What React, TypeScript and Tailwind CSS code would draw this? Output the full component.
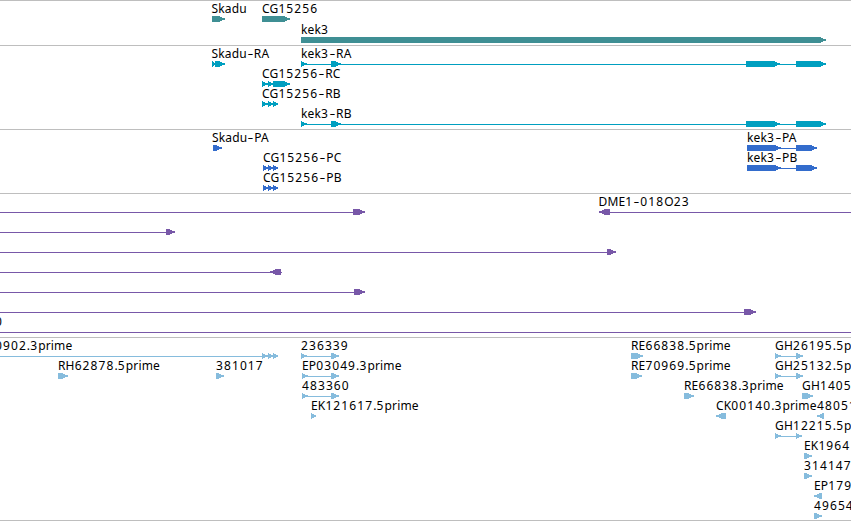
type Feature = {
  label?: string;
  x: number;
  // [start, end] pairs, one arrow head is drawn per exon
  exons?: [number, number][];
  line?: [number, number];
  reverse?: boolean;
};

type Track = {
  name: string;
  className: string;
  rowClass: string;
  rows: Feature[][];
};

const tracks: Track[] = [
  {
    name: 'gene',
    className: 'text-[#3f8f94] pb-0.5',
    rowClass: 'h-[21px]',
    rows: [
      [
        { label: 'Skadu', x: 211.5, exons: [[212, 225]] },
        { label: 'CG15256', x: 262, exons: [[262, 290]] },
      ],
      [{ label: 'kek3', x: 301, exons: [[301, 826]] }],
    ],
  },
  {
    name: 'transcript',
    className: 'text-[#009fc0] pb-[3px]',
    rowClass: 'h-5',
    rows: [
      [
        { label: 'Skadu-RA', x: 211.5, exons: [[212, 216], [215, 225]] },
        { label: 'kek3-RA', x: 301, line: [301, 826], exons: [[301, 307], [331, 341], [746, 780], [796, 826]] },
      ],
      [{ label: 'CG15256-RC', x: 262, exons: [[262, 268], [268, 274], [273, 290]] }],
      [{ label: 'CG15256-RB', x: 262, exons: [[262, 268], [268, 274], [273, 278]] }],
      [{ label: 'kek3-RB', x: 301, line: [301, 826], exons: [[301, 307], [331, 341], [746, 780], [796, 826]] }],
    ],
  },
  {
    name: 'protein',
    className: 'text-[#336ccc] pb-[3px]',
    rowClass: 'h-5',
    rows: [
      [
        { label: 'Skadu-PA', x: 212, exons: [[213, 222]] },
        { label: 'kek3-PA', x: 747, line: [747, 817], exons: [[747, 781], [796, 817]] },
      ],
      [
        { label: 'CG15256-PC', x: 263, exons: [[263, 268], [268, 274], [273, 278]] },
        { label: 'kek3-PB', x: 747, line: [747, 817], exons: [[747, 781], [796, 817]] },
      ],
      [{ label: 'CG15256-PB', x: 263, exons: [[263, 268], [268, 274], [273, 278]] }],
    ],
  },
  {
    name: 'bac',
    className: 'text-[#7858a8] pb-[3px]',
    rowClass: 'h-5',
    rows: [
      [
        { x: 0, line: [0, 360], exons: [[353, 365]] },
        { label: 'DME1-018O23', x: 598.5, line: [600, 851], exons: [[599, 610]], reverse: true },
      ],
      [{ x: 0, line: [0, 170], exons: [[166, 175]] }],
      [{ x: 0, line: [0, 612], exons: [[607, 616]] }],
      [{ x: 0, line: [0, 282], exons: [[270, 281]], reverse: true }],
      [{ x: 0, line: [0, 360], exons: [[354, 365]] }],
      [{ x: 0, line: [0, 750], exons: [[744, 756]] }],
      [{ label: '0', x: -5, line: [0, 851] }],
    ],
  },
  {
    name: 'est',
    className: 'text-[#86bcdd] pb-0.5',
    rowClass: 'h-5',
    rows: [
      [
        { label: '0902.3prime', x: -5, line: [0, 278], exons: [[262, 268], [268, 274], [273, 278]] },
        { label: '236339', x: 301, line: [301, 335], exons: [[301, 307], [331, 339]] },
        { label: 'RE66838.5prime', x: 631, exons: [[631, 643]] },
        { label: 'GH26195.5p', x: 775, line: [775, 800], exons: [[775, 781], [796, 803]] },
      ],
      [
        { label: 'RH62878.5prime', x: 58, exons: [[58, 68]] },
        { label: '381017', x: 216, exons: [[216, 224]] },
        { label: 'EP03049.3prime', x: 302, line: [302, 335], exons: [[302, 308], [331, 339]] },
        { label: 'RE70969.5prime', x: 631, exons: [[631, 642]] },
        { label: 'GH25132.5p', x: 775, line: [775, 800], exons: [[775, 781], [796, 803]] },
      ],
      [
        { label: '483360', x: 302, line: [302, 335], exons: [[302, 308], [331, 339]] },
        { label: 'RE66838.3prime', x: 684, exons: [[684, 694]] },
        { label: 'GH1405', x: 802, exons: [[802, 813]] },
      ],
      [
        { label: 'EK121617.5prime', x: 311, exons: [[311, 316]] },
        { label: 'CK00140.3prime', x: 716, exons: [[716, 726]], reverse: true },
        { label: '48051', x: 817, exons: [[817, 824]], reverse: true },
      ],
      [{ label: 'GH12215.5p', x: 775, line: [775, 800], exons: [[775, 781], [796, 802]] }],
      [{ label: 'EK1964', x: 804, exons: [[804, 812]] }],
      [{ label: '314147', x: 804, exons: [[804, 812]] }],
      [{ label: 'EP179', x: 814, exons: [[814, 822]], reverse: true }],
      [{ label: '49654', x: 814, exons: [[814, 822]] }],
    ],
  },
];

function arrowPoints(start: number, end: number, reverse?: boolean) {
  const head = Math.min(6, end - start);
  if (reverse) {
    return `${end},0 ${start + head},0 ${start},2.6 ${start},3.4 ${start + head},6 ${end},6`;
  }
  return `${start},0 ${end - head},0 ${end},2.6 ${end},3.4 ${end - head},6 ${start},6`;
}

// digits are set wider than letters, the hyphen is stretched
function Label({ text, x }: { text: string; x: number }) {
  return (
    <span className="absolute top-0 whitespace-nowrap leading-4 text-black" style={{ left: x }}>
      {text.split(/(\d+|-)/).map((part, index) => {
        if (part === '-') {
          return (
            <span key={index} className="inline-block w-[7px] scale-x-150 text-center tracking-normal">
              -
            </span>
          );
        }
        return (
          <span key={index} className={/^\d/.test(part) ? 'tracking-[1.1px]' : 'tracking-[0.15px]'}>
            {part}
          </span>
        );
      })}
    </span>
  );
}

function FeatureRow({ features, rowClass }: { features: Feature[]; rowClass: string }) {
  return (
    <div className={`relative ${rowClass}`}>
      <div className="h-[15px]">
        {features.map((feature, index) =>
          feature.label ? <Label key={index} text={feature.label} x={feature.x} /> : null
        )}
      </div>
      <svg width="851" height="6" className="relative block" fill="currentColor" shapeRendering="crispEdges">
        {features.map((feature, index) => (
          <g key={index}>
            {feature.line && (
              <rect x={feature.line[0]} y="3" width={feature.line[1] - feature.line[0]} height="1" />
            )}
            {feature.exons?.map(([start, end]) => (
              <polygon key={start} points={arrowPoints(start, end, feature.reverse)} />
            ))}
          </g>
        ))}
      </svg>
    </div>
  );
}

export default function App() {
  return (
    <main className="h-[521px] w-[851px] overflow-hidden border-b border-[#bebebe] bg-white font-['Noto_Sans',sans-serif] text-[12px]">
      {tracks.map((track) => (
        <section key={track.name} className={`border-t border-t-[#bebebe] ${track.className}`}>
          {track.rows.map((features, index) => (
            <FeatureRow key={index} features={features} rowClass={track.rowClass} />
          ))}
        </section>
      ))}
    </main>
  );
}
